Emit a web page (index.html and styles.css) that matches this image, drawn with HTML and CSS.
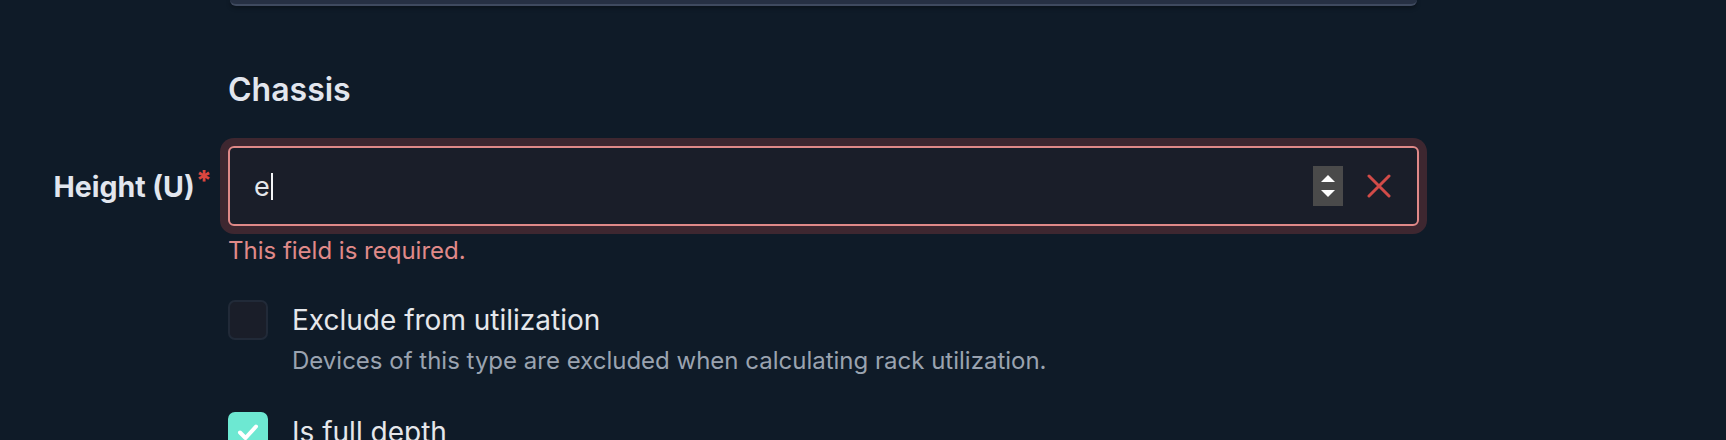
FILE: index.html
```html
<!DOCTYPE html>
<html lang="en">
<head>
<meta charset="utf-8">
<title>Chassis</title>
<link rel="stylesheet" href="styles.css">
</head>
<body>
<div class="topbar"></div>
<div class="form">
  <div class="spacer"></div>
  <h2 class="heading">Chassis</h2>

  <label class="label" for="height">Height (U)<span class="req">*</span></label>
  <div class="field">
    <div class="input-wrap">
      <span class="value">e</span><span class="caret"></span>
      <span class="grow"></span>
      <span class="spinner">
        <svg width="16" height="30" viewBox="0 0 16 30"><path d="M8 4 L15 11 L1 11 Z" fill="#fff"/><path d="M8 26 L15 19 L1 19 Z" fill="#fff"/></svg>
      </span>
      <span class="clear">
        <svg width="24" height="24" viewBox="0 0 24 24"><path d="M2 2 L22 22 M22 2 L2 22" stroke="#d24b48" stroke-width="3" stroke-linecap="round"/></svg>
      </span>
    </div>
    <div class="error">This field is required.</div>
  </div>

  <div class="spacer"></div>
  <div class="check-row">
    <span class="box"></span>
    <div class="check-text">
      <div class="check-label">Exclude from utilization</div>
      <div class="check-help">Devices of this type are excluded when calculating rack utilization.</div>
    </div>
  </div>

  <div class="spacer"></div>
  <div class="check-row second">
    <span class="box checked">
      <svg width="26" height="26" viewBox="0 0 26 26"><path d="M5 13.5 L10.5 19 L21 7.5" fill="none" stroke="#fff" stroke-width="4" stroke-linecap="round" stroke-linejoin="round"/></svg>
    </span>
    <div class="check-text">
      <div class="check-label">Is full depth</div>
    </div>
  </div>
</div>
</body>
</html>
```
FILE: styles.css
```css
html, body {
  margin: 0;
  padding: 0;
  background: #0f1b28;
  height: 440px;
  overflow: hidden;
}
body {
  font-family: Inter, "Noto Sans", sans-serif;
  color: #e5e7eb;
}
.topbar {
  margin-left: 230px;
  width: 1187px;
  height: 4px;
  background: #263043;
  border-bottom: 2px solid #3f4a5f;
  border-radius: 0 0 6px 6px;
  box-shadow: 0 2px 4px rgba(0,0,0,0.35);
}
.form {
  display: grid;
  grid-template-columns: 228px 1191px;
}
.heading {
  margin: 65px 0 0 0;
  font-size: 32px;
  line-height: 38px;
  font-weight: 600;
  color: #e2e6ee;
  height: 75px;
}
.label {
  font-size: 28.5px;
  font-weight: 700;
  color: #e2e6ee;
  padding-right: 16px;
  height: 80px;
  display: flex;
  align-items: center;
  justify-content: flex-end;
  white-space: nowrap;
}
.req {
  color: #d9463f;
  font-size: 28px;
  font-weight: 800;
  line-height: 28px;
  align-self: flex-start;
  margin-top: 21px;
  margin-left: 1px;
}
.field {
  display: flex;
  flex-direction: column;
}
.input-wrap {
  height: 80px;
  box-sizing: border-box;
  border: 2px solid #e08988;
  border-radius: 6px;
  background: #1a1e29;
  box-shadow: 0 0 0 8px #3e2730;
  display: flex;
  align-items: center;
  padding: 0 26px 0 24px;
}
.value {
  font-size: 27px;
  color: #e5e7eb;
}
.caret {
  width: 2px;
  height: 27px;
  background: #f3f4f6;
  margin-left: 1px;
}
.grow { flex: 1; }
.spinner {
  width: 30px;
  height: 40px;
  background: #4a4a4a;
  display: flex;
  align-items: center;
  justify-content: center;
}
.clear {
  margin-left: 24px;
  display: flex;
}
.error {
  margin-top: 11px;
  font-size: 24px;
  line-height: 28px;
  color: #e08a89;
}
.check-row {
  display: flex;
  margin-top: 35px;
}
.check-row.second {
  margin-top: 34px;
}
.box {
  width: 40px;
  height: 40px;
  box-sizing: border-box;
  border: 2px solid #212a38;
  border-radius: 7px;
  background: #1a1e29;
  flex: none;
  display: flex;
  align-items: center;
  justify-content: center;
}
.box.checked {
  background: #6de8d2;
  border-color: #6de8d2;
}
.check-text {
  margin-left: 24px;
}
.check-label {
  font-size: 28px;
  line-height: 40px;
  color: #e5e7eb;
}
.check-help {
  margin-top: 4px;
  font-size: 24px;
  line-height: 34px;
  color: #9aa3b0;
}
```
